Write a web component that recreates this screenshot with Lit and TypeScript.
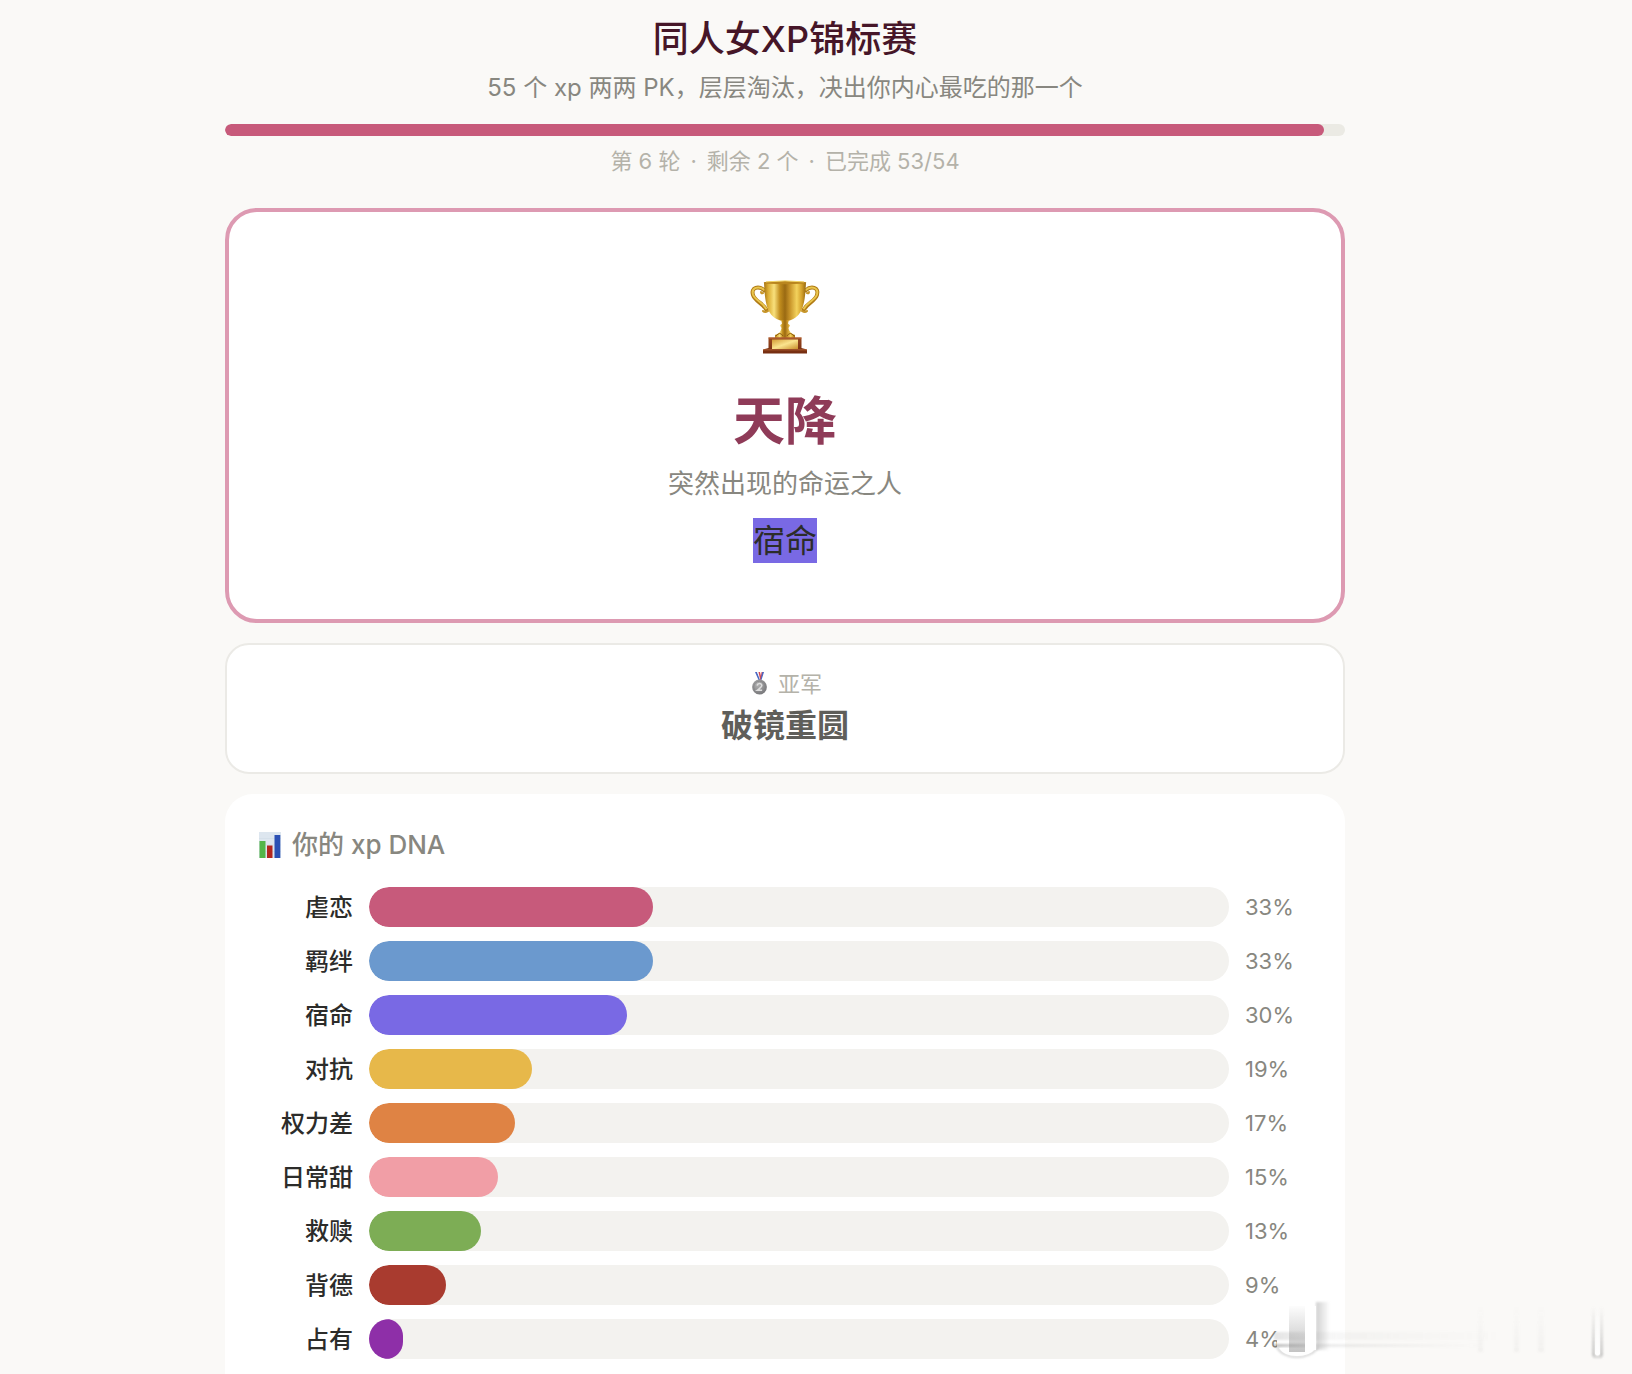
import { LitElement, html, css, svg } from "lit";
import { customElement, property } from "lit/decorators.js";

interface Trait {
  name: string;
  percent: number;
  color: string;
}

const TRAITS: Trait[] = [
  { name: "虐恋", percent: 33, color: "#c75a7b" },
  { name: "羁绊", percent: 33, color: "#6b99ce" },
  { name: "宿命", percent: 30, color: "#7969e4" },
  { name: "对抗", percent: 19, color: "#e7b84a" },
  { name: "权力差", percent: 17, color: "#df8344" },
  { name: "日常甜", percent: 15, color: "#f19ea6" },
  { name: "救赎", percent: 13, color: "#7dad55" },
  { name: "背德", percent: 9, color: "#a93b2f" },
  { name: "占有", percent: 4, color: "#8e2fa8" },
];

const trophyIcon = svg`
  <svg class="trophy" viewBox="0 0 90 100" role="img" aria-label="冠军奖杯">
    <defs>
      <linearGradient id="cup" x1="0" x2="1" y1="0" y2="0">
        <stop offset="0" stop-color="#a87512" />
        <stop offset="0.1" stop-color="#dcae34" />
        <stop offset="0.24" stop-color="#f8e07c" />
        <stop offset="0.38" stop-color="#c08c1d" />
        <stop offset="0.5" stop-color="#9a6a12" />
        <stop offset="0.62" stop-color="#c9952a" />
        <stop offset="0.78" stop-color="#f3d25c" />
        <stop offset="0.9" stop-color="#d3a02a" />
        <stop offset="1" stop-color="#96670f" />
      </linearGradient>
      <linearGradient id="plate" x1="0" x2="1" y1="0" y2="1">
        <stop offset="0" stop-color="#d49c34" />
        <stop offset="0.5" stop-color="#fae48e" />
        <stop offset="1" stop-color="#c98f2c" />
      </linearGradient>
      <linearGradient id="wood" x1="0" x2="0" y1="0" y2="1">
        <stop offset="0" stop-color="#9a4a20" />
        <stop offset="1" stop-color="#742c10" />
      </linearGradient>
    </defs>
    <g fill="none" stroke-linecap="round">
      <path stroke="#b17c17" stroke-width="4" d="M24.500 22.500C19 17.500 10.500 19 13 27C15 33.500 22 34 26.500 42" />
      <path stroke="#eac64e" stroke-width="2" d="M24 21.700C19 17.500 11 19.500 13 26.500C15 32.500 22 33.500 26 40.500" />
      <path stroke="#b17c17" stroke-width="4" d="M65.500 22.500C71 17.500 79.500 19 77 27C75 33.500 68 34 63.500 42" />
      <path stroke="#eac64e" stroke-width="2" d="M66 21.700C71 17.500 79 19.500 77 26.500C75 32.500 68 33.500 64 40.500" />
      <path stroke="#c7962a" stroke-width="2" d="M23 25q-2 1-2-1M23 43q2 2 5 0M67 25q2 1 2-1M67 43q-2 2-5 0" />
    </g>
    <path fill="url(#cup)" d="M24 14.500C25 33 26 47 39 52Q45 54.500 51 52C64 47 65 33 66 14.500Z" />
    <ellipse cx="45" cy="14.700" rx="21.300" ry="1.600" fill="#b9851e" />
    <path d="M26 13.900Q45 11.800 64 13.900" fill="none" stroke="#f3d566" stroke-width="1" />
    <path fill="url(#cup)" d="M41 52H49L48 55.500 50 57.500 48.500 60Q49 65 55 67V70H35V67Q41 65 41.500 60L40 57.500 42 55.500Z" />
    <path d="M36 68q4-5 7 0M54 68q-4-5-7 0" fill="none" stroke="#8d5d10" stroke-width="1" />
    <path fill="url(#wood)" d="M28.500 69.500H61.500V80L67 81.500V85.500H23V81.500L28.500 80Z" />
    <path fill="#bb6b3a" d="M28.500 69.500H61.500V70.500H28.500ZM23 81.500H67V82.300H23Z" />
    <path fill="url(#plate)" d="M32 71.500H58V81H32Z" />
  </svg>
`;

const medalIcon = svg`
  <svg class="medal" viewBox="0 0 22 24" aria-hidden="true">
    <defs>
      <radialGradient id="silver" cx="0.4" cy="0.35" r="0.7">
        <stop offset="0" stop-color="#b4b4b4" />
        <stop offset="1" stop-color="#757578" />
      </radialGradient>
    </defs>
    <path fill="#4a67c4" d="M7 0H9L12.500 8H10.500Z" />
    <path fill="#f2f2f5" d="M9 0H10.500L13 7 12 8Z" />
    <path fill="#d8484f" d="M10.500 0H12L13 4 13.500 0H15.500L12.500 9Z" />
    <path fill="#4a67c4" d="M14.300 0H16L13.500 8 12.500 7.500Z" />
    <circle cx="11.500" cy="15" r="7.400" fill="url(#silver)" />
    <circle cx="11.500" cy="15" r="5.800" fill="none" stroke="#828285" stroke-width="0.700" />
    <path fill="none" stroke="#dedede" stroke-width="1.600" d="M9.100 13.500Q9.500 11.500 11.500 11.500T13.800 13.500Q13.700 15 9.300 18.300H14.100" />
  </svg>
`;

const chartIcon = svg`
  <svg class="chart" viewBox="0 0 24 28" aria-hidden="true">
    <path fill="#dde6ef" d="M1 1H23V27H1Z" />
    <path stroke="#d0dbe6" stroke-width="0.600" d="M1 7.500H23M1 14H23M1 20.500H23" />
    <path fill="#53b548" d="M1.500 10H7.500V27H1.500Z" />
    <path fill="#b3261f" d="M9 14.500H14.500V27H9Z" />
    <path fill="#2b50b4" d="M16.500 4H22.300V27H16.500Z" />
  </svg>
`;

@customElement("progress-header")
export class ProgressHeader extends LitElement {
  @property({ type: Number }) done = 0;
  @property({ type: Number }) total = 1;

  static styles = css`
    :host {
      display: block;
      text-align: center;
    }
    .title {
      margin: 0;
      font-size: 36px;
      line-height: 50px;
      font-weight: 500;
      color: #461628;
    }
    .subtitle {
      margin: 6px 0 18px;
      font-size: 24px;
      line-height: 36px;
      color: #888780;
    }
    .track {
      height: 12px;
      border-radius: 6px;
      background: #ebeae4;
      overflow: hidden;
    }
    .fill {
      height: 100%;
      border-radius: 6px;
      background: #c75a7b;
    }
    .status {
      display: flex;
      justify-content: center;
      gap: 10px;
      margin: 10px 0 0;
      font-size: 22px;
      line-height: 30px;
      color: #b4b2a9;
    }
  `;

  render() {
    return html`
      <h1 class="title">同人女XP锦标赛</h1>
      <p class="subtitle">55 个 xp 两两 PK，层层淘汰，决出你内心最吃的那一个</p>
      <div
        class="track"
        role="progressbar"
        aria-label="比赛进度"
        aria-valuemin="0"
        aria-valuemax=${this.total}
        aria-valuenow=${this.done}
      >
        <div class="fill" style="width: ${(this.done / this.total) * 100}%"></div>
      </div>
      <p class="status">
        <span>第 6 轮</span><span>·</span><span>剩余 2 个</span><span>·</span
        ><span>已完成 ${this.done}/${this.total}</span>
      </p>
    `;
  }
}

@customElement("trait-chart")
export class TraitChart extends LitElement {
  @property({ attribute: false }) traits: Trait[] = [];

  static styles = css`
    :host {
      display: block;
    }
    .list {
      display: grid;
      gap: 14px;
      margin: 0;
      padding: 0;
      list-style: none;
    }
    .row {
      display: grid;
      grid-template-columns: 96px 1fr 68px;
      gap: 16px;
      align-items: center;
    }
    .name {
      padding-top: 2px;
      font-size: 24px;
      line-height: 38px;
      font-weight: 500;
      text-align: right;
      color: #2c2c2a;
    }
    .track {
      height: 40px;
      border-radius: 20px;
      background: #f3f2ef;
      overflow: hidden;
    }
    .fill {
      height: 100%;
      border-radius: 20px;
    }
    .percent {
      font-size: 22px;
      line-height: 40px;
      color: #888780;
    }
  `;

  render() {
    return html`
      <ul class="list">
        ${this.traits.map(
          (t) => html`
            <li class="row">
              <span class="name">${t.name}</span>
              <div class="track">
                <div class="fill" style="width: ${t.percent}%; background: ${t.color}"></div>
              </div>
              <span class="percent">${t.percent}%</span>
            </li>
          `
        )}
      </ul>
    `;
  }
}

@customElement("app-root")
export class AppRoot extends LitElement {
  static styles = css`
    :host {
      display: block;
      position: relative;
      height: 100vh;
      overflow: hidden;
      background: #faf9f7;
      font-family: Inter, "Noto Sans CJK SC", sans-serif;
    }
    .scroller {
      box-sizing: border-box;
      height: 100%;
      padding: 14px 62px 0 0;
      overflow-y: auto;
      scrollbar-width: none;
    }
    .page {
      display: flex;
      flex-direction: column;
      gap: 20px;
      max-width: 1120px;
      margin: 0 auto;
      padding-bottom: 32px;
    }
    progress-header {
      margin-bottom: 12px;
    }
    .card {
      background: #fff;
      text-align: center;
    }
    .champion {
      display: flex;
      flex-direction: column;
      align-items: center;
      padding: 56px 32px;
      border: 4px solid #dd9ab2;
      border-radius: 32px;
    }
    .trophy {
      width: 90px;
      height: 100px;
    }
    .winner {
      margin: 18px 0 8px;
      font-size: 52px;
      line-height: 72px;
      font-weight: 700;
      color: #8f3b58;
    }
    .description {
      margin: 0 0 16px;
      font-size: 26px;
      line-height: 36px;
      color: #888780;
    }
    .tag {
      font-size: 32px;
      line-height: 45px;
      color: #2c2c2a;
      background: #7969e4;
    }
    .runner {
      padding: 24px;
      border: 2px solid #ebeae6;
      border-radius: 24px;
    }
    .place {
      display: flex;
      justify-content: center;
      align-items: center;
      gap: 8px;
      margin: 0 0 5px;
      font-size: 22px;
      line-height: 30px;
      font-weight: 400;
      color: #b4b2a9;
    }
    .medal {
      width: 22px;
      height: 24px;
    }
    .second {
      margin: 0;
      font-size: 32px;
      line-height: 44px;
      font-weight: 700;
      color: #5f5e5a;
    }
    .dna {
      padding: 32px 32px 64px;
      border-radius: 28px;
      text-align: left;
    }
    .heading {
      display: flex;
      align-items: center;
      gap: 10px;
      margin: 0 0 23px;
      font-size: 26px;
      line-height: 38px;
      font-weight: 500;
      color: #888780;
    }
    .chart {
      width: 24px;
      height: 28px;
      margin-left: 1px;
    }
    .smudge {
      position: absolute;
      right: 0;
      bottom: 0;
      width: 372px;
      height: 84px;
      pointer-events: none;
    }
  `;

  render() {
    return html`
      <div class="scroller">
        <main class="page">
          <progress-header .done=${53} .total=${54}></progress-header>

          <section class="card champion">
            ${trophyIcon}
            <h2 class="winner">天降</h2>
            <p class="description">突然出现的命运之人</p>
            <span class="tag">宿命</span>
          </section>

          <section class="card runner">
            <h2 class="place">${medalIcon}<span>亚军</span></h2>
            <p class="second">破镜重圆</p>
          </section>

          <section class="card dna">
            <h2 class="heading">${chartIcon}<span>你的 xp DNA</span></h2>
            <trait-chart .traits=${TRAITS}></trait-chart>
          </section>
        </main>
      </div>

      <svg class="smudge" viewBox="0 0 372 84" aria-hidden="true">
        <defs>
          <linearGradient id="down" x1="0" x2="0" y1="0" y2="1">
            <stop offset="0" stop-color="#888" stop-opacity="0.02" />
            <stop offset="1" stop-color="#888" stop-opacity="0.5" />
          </linearGradient>
          <linearGradient id="side" x1="0" x2="1" y1="0" y2="0">
            <stop offset="0" stop-color="#999" stop-opacity="0.45" />
            <stop offset="1" stop-color="#999" stop-opacity="0" />
          </linearGradient>
          <linearGradient id="streak" x1="0" x2="1" y1="0" y2="0">
            <stop offset="0" stop-color="#777" stop-opacity="0.5" />
            <stop offset="0.2" stop-color="#999" stop-opacity="0.22" />
            <stop offset="1" stop-color="#aaa" stop-opacity="0" />
          </linearGradient>
          <linearGradient id="pale" x1="0" x2="0" y1="0" y2="1">
            <stop offset="0" stop-color="#fff" stop-opacity="0" />
            <stop offset="1" stop-color="#fff" />
          </linearGradient>
          <linearGradient id="edge" x1="0" x2="0" y1="0" y2="1">
            <stop offset="0" stop-color="#999" stop-opacity="0" />
            <stop offset="1" stop-color="#888" stop-opacity="0.55" />
          </linearGradient>
          <filter id="soft" x="-20%" y="-20%" width="140%" height="140%">
            <feGaussianBlur stdDeviation="1" />
          </filter>
        </defs>
        <path fill="#fff" d="M17 14H56V58Q50 68 37 68T17 58Z" />
        <g filter="url(#soft)">
          <path fill="url(#streak)" d="M14 54H220V57H14Z" />
          <path fill="url(#streak)" opacity="0.4" d="M14 42H240V50H14Z" />
          <path fill="none" stroke="#888" stroke-opacity="0.45" stroke-width="1.500" d="M17 58Q24 67 37 67T58 58" />
          <path fill="url(#side)" d="M56 12H70V60H56Z" />
        </g>
        <path fill="#fff" d="M19 58H56Q50 66 37 66T19 58Z" />
        <path fill="#fff" d="M45 16H56V60H45Z" />
        <path fill="url(#down)" d="M29 16H45V62H29Z" />
        <g filter="url(#soft)" fill="url(#edge)">
          <path opacity="0.12" d="M218 16H223V62H218ZM254 16H259V62H254ZM278 16H284V62H278Z" />
          <path opacity="0.8" d="M332 16H335V66H332ZM340 16H343V66H340Z" />
          <path opacity="0.8" d="M333 64H342V68H333Z" />
        </g>
        <path fill="url(#pale)" d="M335 16H340V64Q337.500 67 335 64Z" />
      </svg>
    `;
  }
}
